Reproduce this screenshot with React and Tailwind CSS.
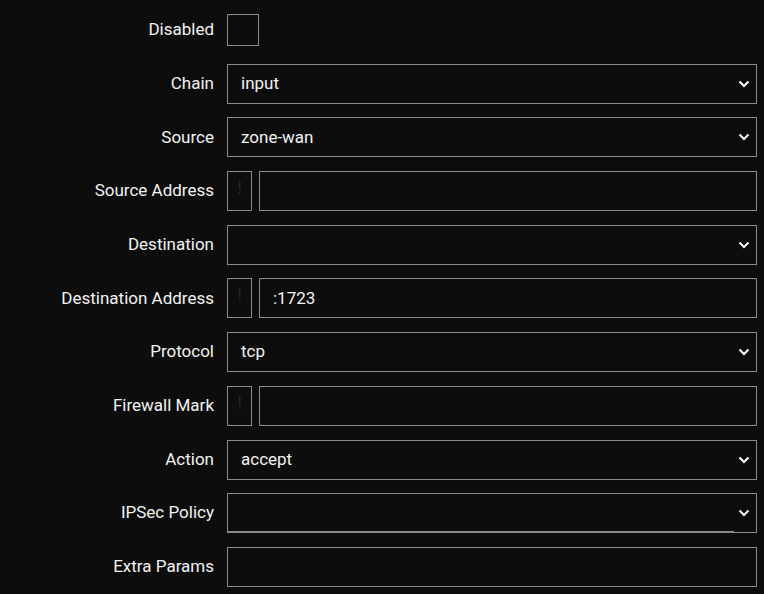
import React from "react";

const Chevron = () => (
  <svg width="12" height="8" viewBox="0 0 12 8" className="absolute right-[6px] top-1/2 -translate-y-1/2">
    <path d="M1.5 1.5 L6 6 L10.5 1.5" fill="none" stroke="#ffffff" strokeWidth="2" />
  </svg>
);

const Label = ({ children }) => (
  <div className="w-[214px] shrink-0 text-right text-[17px] text-[#f2f2f2]">{children}</div>
);

const Select = ({ value, artifact }) => (
  <div className="relative flex-1 h-[40px] border border-[#8a8a8a] bg-[#0d0d0d] flex items-center pl-[13px] text-[17px] text-[#f2f2f2]">
    {value}
    <Chevron />
    {artifact && <div className="absolute left-0 bottom-0 w-[506px] h-[1px] bg-[#8a8a8a]" />}
  </div>
);

const Input = ({ value }) => (
  <div className="flex-1 h-[40px] border border-[#8a8a8a] bg-[#0d0d0d] flex items-center pl-[13px] text-[17px] text-[#f2f2f2]">
    {value}
  </div>
);

const Addr = ({ value }) => (
  <div className="flex-1 flex gap-[7px]">
    <div className="w-[25px] h-[40px] border border-[#8a8a8a] bg-[#0d0d0d] flex items-start justify-center pt-[5px] text-[18px] leading-[22px] text-[#262626]">!</div>
    <Input value={value} />
  </div>
);

const Row = ({ label, children }) => (
  <div className="flex items-center h-[40px] pr-[7px]">
    <Label>{label}</Label>
    <div className="ml-[13px] flex-1 flex items-center">{children}</div>
  </div>
);

export default function App() {
  return (
    <div className="w-[764px] h-[594px] bg-[#0d0d0d] pt-[10px] flex flex-col gap-[13.7px] overflow-hidden" style={{ fontFamily: "Roboto, 'Liberation Sans', sans-serif" }}>
      <Row label="Disabled">
        <div className="w-[32px] h-[32px] border border-[#8a8a8a] bg-[#0d0d0d]" />
      </Row>
      <Row label="Chain"><Select value="input" /></Row>
      <Row label="Source"><Select value="zone-wan" /></Row>
      <Row label="Source Address"><Addr value="" /></Row>
      <Row label="Destination"><Select value="" /></Row>
      <Row label="Destination Address"><Addr value=":1723" /></Row>
      <Row label="Protocol"><Select value="tcp" /></Row>
      <Row label="Firewall Mark"><Addr value="" /></Row>
      <Row label="Action"><Select value="accept" /></Row>
      <Row label="IPSec Policy"><Select value="" artifact /></Row>
      <Row label="Extra Params"><Input value="" /></Row>
    </div>
  );
}
